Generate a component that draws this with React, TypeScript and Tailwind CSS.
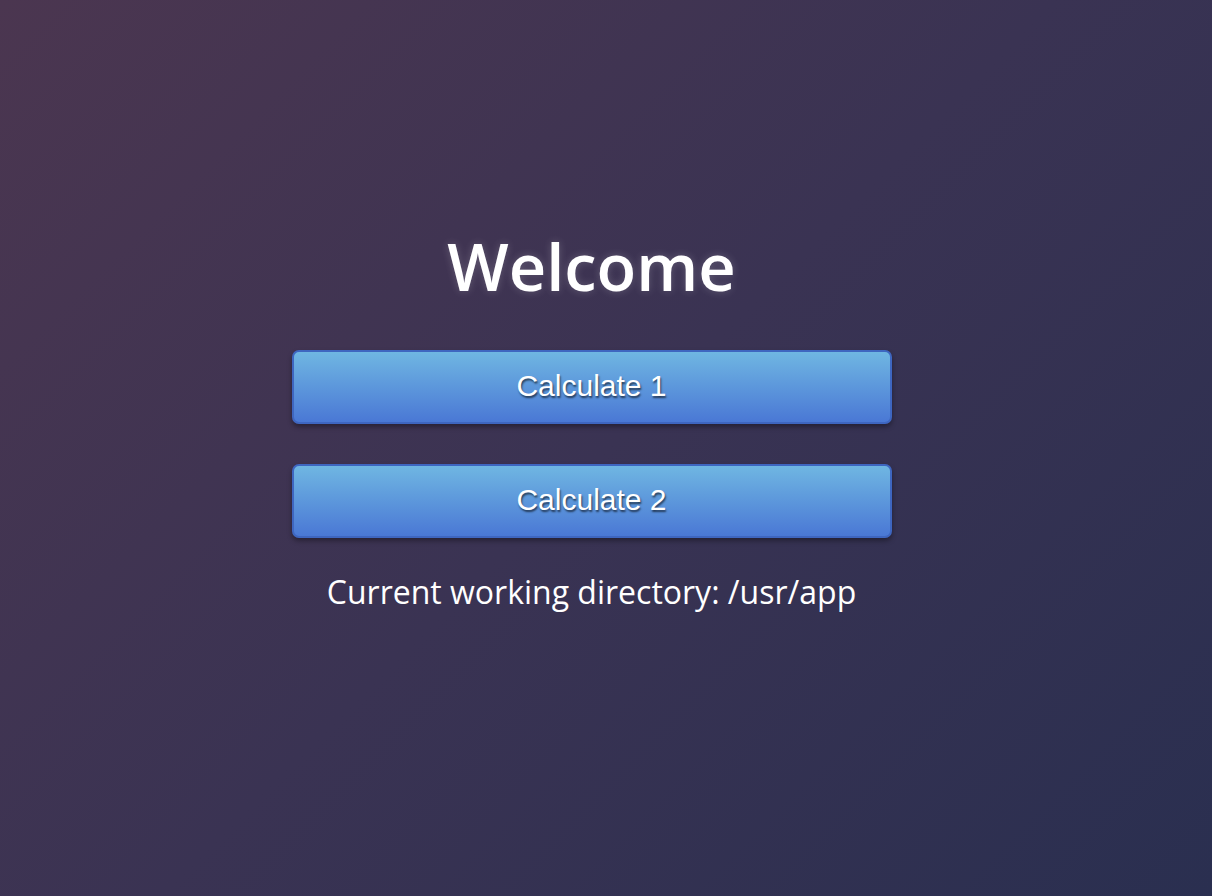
import React from "react";

export default function App() {
  return (
    <div className="w-full min-h-[896px] h-[896px] bg-[linear-gradient(135deg,#4b3650_0%,#3a3353_50%,#2a2f50_100%)] flex flex-col items-center pr-[29px]" style={{ fontFamily: '"Open Sans", sans-serif' }}>
      <h1 className="mt-[222px] text-[65px] leading-[88px] font-semibold text-white [text-shadow:0_0_8px_rgba(255,255,255,0.2)]">Welcome</h1>
      <div className="mt-[40px] flex flex-col gap-[40px] w-[600px]">
        {["Calculate 1", "Calculate 2"].map((t) => (
          <button
            key={t}
            className="h-[74px] w-full pb-[3px] rounded-[7px] border-2 border-[#3e66c0] bg-[linear-gradient(180deg,#6fb6e2_0%,#4a78d5_100%)] text-white text-[30px] shadow-[0_3px_5px_rgba(0,0,0,0.35)] [text-shadow:1px_2px_2px_rgba(0,0,0,0.6)]"
            style={{ fontFamily: '"Liberation Sans", Arial, sans-serif' }}
          >
            {t}
          </button>
        ))}
      </div>
      <p className="mt-[30px] text-[32px] text-white leading-[48px]">Current working directory: /usr/app</p>
    </div>
  );
}
